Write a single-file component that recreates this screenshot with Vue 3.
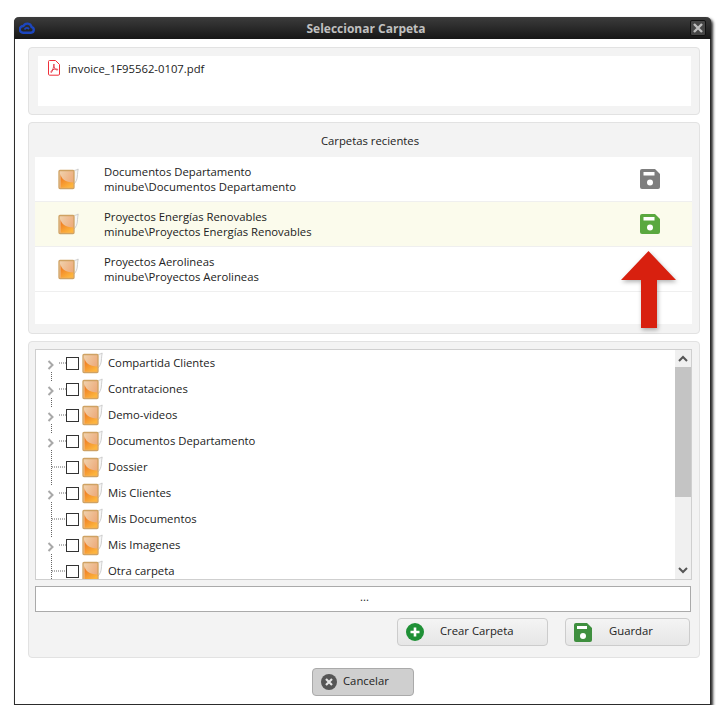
<template>
  <div class="window">
    <!-- gradients shared by all folder icons -->
    <svg class="defs" width="0" height="0">
      <defs>
        <linearGradient id="folderBack" x1="0" y1="0" x2="1" y2="0.6">
          <stop offset="0" stop-color="#f0d4b0" />
          <stop offset="1" stop-color="#eda878" />
        </linearGradient>
        <linearGradient id="folderSwoosh" x1="0" y1="0" x2="0.6" y2="1">
          <stop offset="0" stop-color="#ec6f1c" />
          <stop offset="1" stop-color="#fdb53e" />
        </linearGradient>
      </defs>
    </svg>

    <header class="titlebar">
      <svg class="cloud" viewBox="0 0 16 12" width="16" height="12">
        <path d="M4 10.800h8a2.900 2.900 0 0 0 .6-5.700A4.400 4.400 0 0 0 4.400 4 3.400 3.400 0 0 0 4 10.800z" fill="none" stroke="#1c46bf" stroke-width="2.400" />
        <path d="M5.500 7.500c1.500-2 3-2 4.500-.5" fill="none" stroke="#1c46bf" stroke-width="1.800" />
      </svg>
      <span class="title">Seleccionar Carpeta</span>
      <button class="close" type="button">
        <svg viewBox="0 0 10 10" width="10" height="10">
          <path d="M1 1l8 8M9 1l-8 8" stroke="#bdbdbd" stroke-width="2.400" />
        </svg>
      </button>
    </header>

    <main class="content">
      <section class="panel file-panel">
        <div class="file-box">
          <svg class="pdf" viewBox="0 0 12 16" width="12" height="16">
            <path d="M1.500.5h6l4 4v9.500a1.200 1.200 0 0 1-1.200 1.200H1.500A1.200 1.200 0 0 1 .5 14V1.500a1 1 0 0 1 1-1z" fill="#fff" stroke="#f0303a" />
            <path d="M6 4c-.6 0 0 3 .8 4.500 1 1.500 3.200 2 3 1-.2-.8-3-.5-5 .2C3 10.500 2.500 12.800 3.300 12.500 4.200 12.200 6.600 4 6 4z" fill="none" stroke="#e02030" stroke-width=".8" />
          </svg>
          <span>invoice_1F95562-0107.pdf</span>
        </div>
      </section>

      <section class="panel recent-panel">
        <h2 class="recent-title">Carpetas recientes</h2>
        <ul class="recent-list">
          <li v-for="item in recent" :key="item.name" class="recent-row" :class="{ active: item.active }">
            <svg class="folder recent-folder" viewBox="0 0 21 22" width="21" height="22">
              <path d="M15 2.500c2 0 3.500-.5 5.200-1.500-.6 3-.6 5-.8 7-.2 3-1 6-4.400 9z" fill="#f6f6f6" stroke="#c4c4c4" stroke-width=".8" />
              <rect x="1" y="2.500" width="15" height="18" rx="1" fill="url(#folderBack)" stroke="#cfa263" stroke-width="1.300" />
              <path d="M2.500 6c.5 5 5 8 12.800 8.500v5.300H2.500z" fill="url(#folderSwoosh)" />
            </svg>
            <div class="recent-text">
              <div>{{ item.name }}</div>
              <div>minube\{{ item.name }}</div>
            </div>
            <svg v-if="item.save" class="floppy" viewBox="0 0 20 20" width="20" height="20">
              <path d="M2 0h13l5 5v13a2 2 0 0 1-2 2H2a2 2 0 0 1-2-2V2a2 2 0 0 1 2-2z" :fill="item.active ? '#5aa83f' : '#7e7e7e'" />
              <rect x="3.500" y="3" width="11" height="3.500" fill="#fff" />
              <circle cx="10" cy="13.500" r="3" fill="#fff" />
            </svg>
          </li>
          <li class="recent-empty"></li>
        </ul>
        <!-- flecha de indicacion -->
        <svg class="arrow" viewBox="0 0 55 77" width="55" height="77">
          <path d="M27.500 0L55 29H36v48H20V29H0z" fill="#d8200f" />
        </svg>
      </section>

      <section class="panel tree-panel">
        <div class="tree">
          <ul class="tree-list">
            <li v-for="(node, index) in nodes" :key="node.name" class="tree-row">
              <svg class="guide" viewBox="0 0 30 26" width="30" height="26">
                <path v-if="node.children" d="M12.500 11l4 4-4 4" fill="none" stroke="#a8a8a8" stroke-width="2" />
                <path :d="node.children ? 'M23 13h7' : 'M16 13h14'" stroke="#666" stroke-dasharray="1 1" />
                <path v-if="node.children && index > 0" d="M15.500 0v6" stroke="#666" stroke-dasharray="1 1" />
                <path v-if="node.children" d="M15.500 22v4" stroke="#666" stroke-dasharray="1 1" />
                <path v-else d="M15.500 0v26" stroke="#666" stroke-dasharray="1 1" />
              </svg>
              <span class="checkbox"></span>
              <svg class="folder" viewBox="0 0 21 22" width="21" height="22">
                <path d="M15 2.500c2 0 3.500-.5 5.200-1.500-.6 3-.6 5-.8 7-.2 3-1 6-4.400 9z" fill="#f6f6f6" stroke="#c4c4c4" stroke-width=".8" />
                <rect x="1" y="2.500" width="15" height="18" rx="1" fill="url(#folderBack)" stroke="#cfa263" stroke-width="1.300" />
                <path d="M2.500 6c.5 5 5 8 12.800 8.500v5.300H2.500z" fill="url(#folderSwoosh)" />
              </svg>
              <span class="tree-label">{{ node.name }}</span>
            </li>
          </ul>
          <div class="scrollbar">
            <svg class="scroll-arrow" viewBox="0 0 16 17" width="16" height="17">
              <path d="M4 11l4-4 4 4" fill="none" stroke="#555" stroke-width="2" />
            </svg>
            <div class="scroll-track">
              <div class="scroll-thumb"></div>
            </div>
            <svg class="scroll-arrow" viewBox="0 0 16 17" width="16" height="17">
              <path d="M4 6l4 4 4-4" fill="none" stroke="#555" stroke-width="2" />
            </svg>
          </div>
        </div>

        <div class="path-input">...</div>

        <div class="actions">
          <button class="btn btn-create" type="button">
            <svg viewBox="0 0 18 18" width="18" height="18">
              <circle cx="9" cy="9" r="9" fill="#1f9036" />
              <path d="M9 4.500v9M4.500 9h9" stroke="#fff" stroke-width="2.600" />
            </svg>
            <span>Crear Carpeta</span>
          </button>
          <button class="btn btn-save" type="button">
            <svg viewBox="0 0 18 19" width="18" height="19">
              <path d="M2 0h11l5 5v12a2 2 0 0 1-2 2H2a2 2 0 0 1-2-2V2a2 2 0 0 1 2-2z" fill="#3f8f3f" />
              <rect x="3" y="3" width="10" height="3" fill="#fff" />
              <circle cx="9" cy="13" r="3" fill="#fff" />
            </svg>
            <span>Guardar</span>
          </button>
        </div>
      </section>

      <footer class="footer">
        <button class="btn btn-cancel" type="button">
          <svg viewBox="0 0 16 16" width="16" height="16">
            <circle cx="8" cy="8" r="8" fill="#555" />
            <path d="M5 5l6 6M11 5l-6 6" stroke="#e4e4e4" stroke-width="2.200" />
          </svg>
          <span>Cancelar</span>
        </button>
      </footer>
    </main>
  </div>
</template>

<script setup>
const recent = [
  { name: 'Documentos Departamento', save: true, active: false },
  { name: 'Proyectos Energías Renovables', save: true, active: true },
  { name: 'Proyectos Aerolineas', save: false, active: false },
]

const nodes = [
  { name: 'Compartida Clientes', children: true },
  { name: 'Contrataciones', children: true },
  { name: 'Demo-videos', children: true },
  { name: 'Documentos Departamento', children: true },
  { name: 'Dossier', children: false },
  { name: 'Mis Clientes', children: true },
  { name: 'Mis Documentos', children: false },
  { name: 'Mis Imagenes', children: true },
  { name: 'Otra carpeta', children: false },
]
</script>

<style>
html,
body {
  background: #fff;
}
</style>

<style scoped>
.window {
  box-sizing: border-box;
  width: 697px;
  height: 688px;
  margin: 17px 0 0 14px;
  border: 1px solid #2c2c2c;
  border-top: none;
  border-radius: 5px 5px 0 0;
  background: #fff;
  box-shadow: 2px 2px 3px rgba(20, 20, 20, 0.9);
  font-family: "Open Sans", "Liberation Sans", sans-serif;
  font-size: 11.3px;
  color: #222;
}

.defs {
  position: absolute;
}

.titlebar {
  display: flex;
  align-items: center;
  height: 22px;
  margin: 0 -1px;
  padding: 0 5px 0 5px;
  border-radius: 5px 5px 0 0;
  background: linear-gradient(#3c3c3c, #171717);
}

.cloud {
  flex: none;
}

.title {
  flex: 1;
  padding-left: 7px;
  text-align: center;
  font-size: 12px;
  font-weight: 700;
  color: #c0c0c0;
}

.close {
  display: flex;
  align-items: center;
  justify-content: center;
  box-sizing: border-box;
  width: 16px;
  height: 16px;
  padding: 0;
  border: 1px solid #111;
  border-radius: 2px;
  background: #464646;
}

.content {
  display: flex;
  flex-direction: column;
  gap: 7px;
  padding: 8px 10px 0 13px;
}

.panel {
  box-sizing: border-box;
  position: relative;
  border: 1px solid #e2e2e2;
  border-radius: 4px;
  background: #f3f3f3;
}

.file-panel {
  height: 68px;
  padding: 8px;
  padding-left: 9px;
}

.file-box {
  display: flex;
  align-items: flex-start;
  gap: 8px;
  height: 50px;
  padding: 4px 10px;
  box-sizing: border-box;
  background: #fff;
}

.file-box span {
  line-height: 18px;
}

.recent-panel {
  height: 212px;
  padding: 0 7px 0 6px;
}

.recent-title {
  margin: 0;
  height: 34px;
  padding-left: 13px;
  box-sizing: border-box;
  font-size: 11.3px;
  font-weight: 400;
  line-height: 36px;
  text-align: center;
}

.recent-list {
  margin: 0;
  padding: 0;
  list-style: none;
  background: #fff;
}

.recent-row {
  display: flex;
  align-items: center;
  box-sizing: border-box;
  height: 45px;
  padding: 0 32px 0 23px;
  border-bottom: 1px solid #efefef;
}

.recent-row.active {
  background: #fbfbec;
}

.recent-folder {
  margin-right: 25px;
}

.recent-text {
  flex: 1;
  line-height: 15px;
}

.recent-empty {
  height: 32px;
}

.arrow {
  position: absolute;
  left: 592px;
  top: 128px;
  filter: drop-shadow(1px 2px 2px rgba(0, 0, 0, 0.3));
}

.tree-panel {
  height: 317px;
  padding: 7px 7px 0 6px;
}

.tree {
  display: flex;
  box-sizing: border-box;
  height: 231px;
  border: 1px solid #cfcfcf;
  background: #fff;
  overflow: hidden;
}

.tree-list {
  flex: 1;
  margin: 0;
  padding: 0;
  list-style: none;
  overflow: hidden;
}

.tree-row {
  display: flex;
  align-items: center;
  height: 26px;
}

.guide {
  flex: none;
}

.checkbox {
  box-sizing: border-box;
  width: 13px;
  height: 13px;
  border: 1px solid #333;
  background: #fff;
}

.folder {
  flex: none;
}

.tree-row .folder {
  margin-left: 3px;
  margin-right: 5px;
}

.tree-label {
  padding-bottom: 2px;
}

.scrollbar {
  display: flex;
  flex-direction: column;
  width: 16px;
  background: #f0f0f0;
}

.scroll-arrow {
  flex: none;
}

.scroll-track {
  flex: 1;
}

.scroll-thumb {
  height: 130px;
  background: #c4c4c4;
}

.path-input {
  box-sizing: border-box;
  height: 26px;
  margin-top: 6px;
  margin-right: 1px;
  padding-left: 3px;
  border: 1px solid #aaa;
  background: #fff;
  line-height: 20px;
  text-align: center;
}

.actions {
  display: flex;
  justify-content: flex-end;
  gap: 17px;
  margin-top: 6px;
  padding-right: 2px;
}

.btn {
  display: flex;
  align-items: center;
  box-sizing: border-box;
  height: 28px;
  padding: 0 8px;
  border: 1px solid #ccc;
  border-radius: 4px;
  background: linear-gradient(#f4f4f4, #e6e6e6);
  font: inherit;
  color: inherit;
}

.btn span {
  padding-bottom: 3px;
}

.btn-create {
  width: 151px;
  gap: 16px;
}

.btn-save {
  width: 125px;
  gap: 17px;
}

.footer {
  display: flex;
  justify-content: center;
  margin-top: 3px;
  padding-right: 2px;
}

.btn-cancel {
  width: 102px;
  gap: 6px;
  border-color: #aaa;
  background: #cfcfcf;
}
</style>
